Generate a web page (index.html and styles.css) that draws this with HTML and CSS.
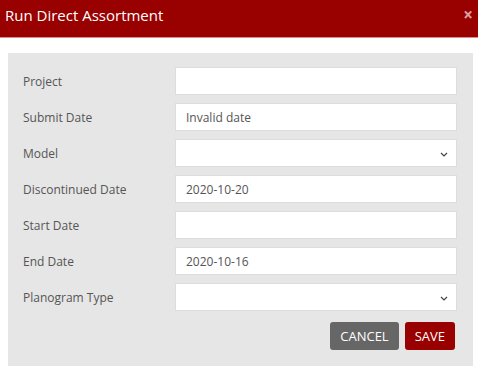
FILE: index.html
```html
<!DOCTYPE html>
<html lang="en">
<head>
  <meta charset="UTF-8" />
  <title>Run Direct Assortment</title>
  <link rel="stylesheet" href="styles.css">
</head>
<body>

  <div class="modal">
    <!-- Header -->
    <div class="modal-header">
      <h1>Run Direct Assortment</h1>
      <span class="close">&times;</span>
    </div>

    <!-- Form Panel -->
    <div class="modal-body">
      <form class="panel">
        <div class="row">
          <label for="project">Project</label>
          <input type="text" id="project" />
        </div>
        <div class="row">
          <label for="submitDate">Submit Date</label>
          <input type="text" id="submitDate" value="Invalid date" />
        </div>
        <div class="row">
          <label for="model">Model</label>
          <div class="select">
            <select id="model"><option></option></select>
            <svg width="8" height="5" viewBox="0 0 8 5"><path d="M1 1l3 3 3-3" fill="none" stroke="#444" stroke-width="1.2"/></svg>
          </div>
        </div>
        <div class="row">
          <label for="discDate">Discontinued Date</label>
          <input type="text" id="discDate" value="2020-10-20" />
        </div>
        <div class="row">
          <label for="startDate">Start Date</label>
          <input type="text" id="startDate" />
        </div>
        <div class="row">
          <label for="endDate">End Date</label>
          <input type="text" id="endDate" value="2020-10-16" />
        </div>
        <div class="row">
          <label for="planogram">Planogram Type</label>
          <div class="select">
            <select id="planogram"><option></option></select>
            <svg width="8" height="5" viewBox="0 0 8 5"><path d="M1 1l3 3 3-3" fill="none" stroke="#444" stroke-width="1.2"/></svg>
          </div>
        </div>

        <!-- Buttons -->
        <div class="actions">
          <button type="button" class="btn btn-cancel">CANCEL</button>
          <button type="button" class="btn btn-save">SAVE</button>
        </div>
      </form>
    </div>
  </div>

</body>
</html>
```

FILE: styles.css
```css
/* === Body === */
body {
  margin: 0;
  background: #ffffff;
  font-family: 'Open Sans', Arial, sans-serif;
}

/* === Header === */
.modal-header {
  background: #990000;
  height: 37px;
  border-bottom: 1px solid #d98c8c;
  display: flex;
  align-items: center;
  justify-content: space-between;
  padding: 0 5px 0 5px;
}

.modal-header h1 {
  margin: 0;
  color: #ffffff;
  font-size: 15px;
  font-weight: 500;
  margin-top: -8px;
}

.close {
  color: #d9a0a0;
  font-size: 17px;
  font-weight: 700;
  margin-top: -9px;
}

/* === Panel === */
.modal-body {
  padding: 15px 5px 0 8px;
}

.panel {
  background: #e6e6e6;
  padding: 14px 15px 20px 15px;
  margin: 0;
}

.row {
  display: flex;
  align-items: center;
  height: 28px;
  margin-bottom: 8px;
}

label {
  width: 152px;
  color: #555555;
  font-size: 12px;
}

input,
.select {
  width: 282px;
  height: 28px;
  box-sizing: border-box;
  border: 1px solid #dcdcdc;
  background: #ffffff;
  padding: 0 10px;
  font-family: inherit;
  font-size: 12px;
  color: #555555;
}

input:focus {
  outline: none;
}

.select {
  position: relative;
  padding: 0;
}

.select select {
  appearance: none;
  border: none;
  background: transparent;
  width: 100%;
  height: 100%;
}

.select svg {
  position: absolute;
  right: 8px;
  top: 12px;
}

/* === Buttons === */
.actions {
  display: flex;
  justify-content: flex-end;
  gap: 6px;
  padding-right: 3px;
  margin-top: 11px;
}

.btn {
  height: 28px;
  border: none;
  border-radius: 3px;
  color: #ffffff;
  font-family: inherit;
  font-size: 13px;
  padding: 0 10px;
  cursor: pointer;
}

.btn-cancel {
  background: #666666;
}

.btn-save {
  background: #990000;
}
```
